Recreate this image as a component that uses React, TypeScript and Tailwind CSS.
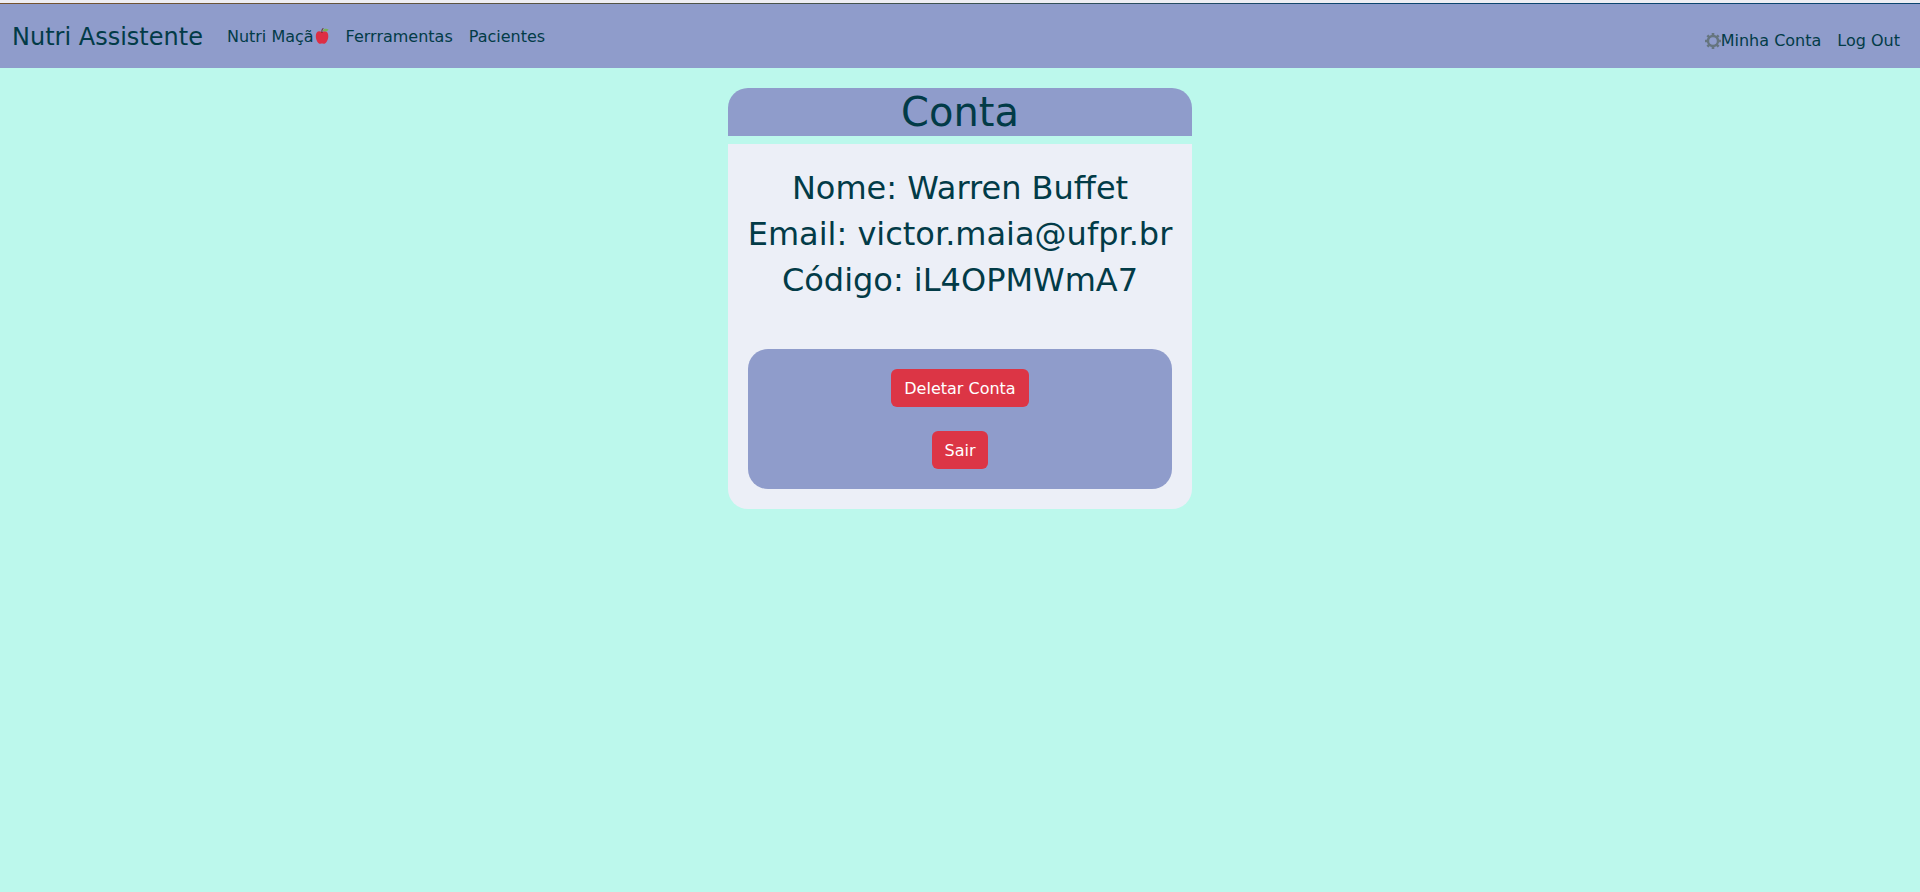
const link = "block px-2 py-2 hover:opacity-80";
const iconLink = "flex items-center px-2 py-2 hover:opacity-80";
const dangerButton = "rounded-md bg-[#dc3545] px-[13px] pt-2 pb-1.5 text-white hover:bg-[#bb2d3b]";

function Apple() {
  return (
    <svg viewBox="0 0 16 18" className="h-[18px] w-4" aria-hidden="true">
      <path d="M8 4.200C5 2.200 1.800 3.300 1.800 8c0 4.300 2.300 7.800 4.500 7.800.8 0 1.100-.2 1.700-.2s.9.200 1.700.2c2.200 0 4.600-3.500 4.600-7.800 0-4.700-3.300-5.800-6.300-3.800z" fill="#dd2e44" />
      <path d="M8 4.900C7.700 3 7.900 1.300 9.200.2" fill="none" stroke="#662113" strokeWidth="1" />
      <path d="M8.700 2.800C9.800.6 12 .4 14.600 1.400 13 3.600 10.900 3.900 8.700 2.800z" fill="#77b255" />
    </svg>
  );
}

function Gear() {
  return (
    <svg viewBox="0 0 16 16" className="h-4 w-4" fill="none" stroke="#66757f" aria-hidden="true">
      <circle cx="8" cy="8" r="5" strokeWidth="2.400" />
      <path d="M8 0v3M8 13v3M0 8h3M13 8h3M2.400 2.400l2.200 2.200M11.400 11.400l2.200 2.200M2.400 13.600l2.200-2.200M11.400 4.600l2.200-2.200" strokeWidth="2.600" />
    </svg>
  );
}

export default function App() {
  return (
    <div className="min-h-screen bg-[#bcf8ec] font-['DejaVu_Sans',sans-serif] text-base text-[#023b47]">
      <div className="h-[3px] bg-[#eeeef3]" />
      <div className="h-px bg-linear-to-r from-[#75532f] via-[#3d5350] to-[#0c456f] to-70%" />
      <nav className="flex h-16 items-center bg-[#8f9ccb] px-3 pt-[2px]">
        <a href="#" className="mr-4 text-2xl">Nutri Assistente</a>
        <ul className="flex">
          <li><a href="#maca" className={iconLink}>Nutri Maçã<Apple /></a></li>
          <li><a href="#ferramentas" className={link}>Ferrramentas</a></li>
          <li><a href="#pacientes" className={link}>Pacientes</a></li>
        </ul>
        <ul className="ml-auto flex pt-2">
          <li><a href="#conta" className={iconLink}><Gear />Minha Conta</a></li>
          <li><a href="#logout" className={link}>Log Out</a></li>
        </ul>
      </nav>
      <main className="mx-auto mt-5 w-fit text-center">
        <h1 className="mb-2 rounded-t-[20px] bg-[#8f9ccb] text-[40px] leading-[48px]">Conta</h1>
        <section className="rounded-b-[20px] bg-[#eceff7] p-5">
          <div className="mb-[50px] pt-[5px] text-[32px] leading-[38px]">
            <p className="mb-2">Nome: Warren Buffet</p>
            <p className="mb-2">Email: victor.maia@ufpr.br</p>
            <p>Código: iL4OPMWmA7</p>
          </div>
          <div className="flex flex-col items-center gap-6 rounded-[20px] bg-[#8f9ccb] p-5">
            <button type="button" className={dangerButton}>Deletar Conta</button>
            <button type="button" className={dangerButton}>Sair</button>
          </div>
        </section>
      </main>
    </div>
  );
}
